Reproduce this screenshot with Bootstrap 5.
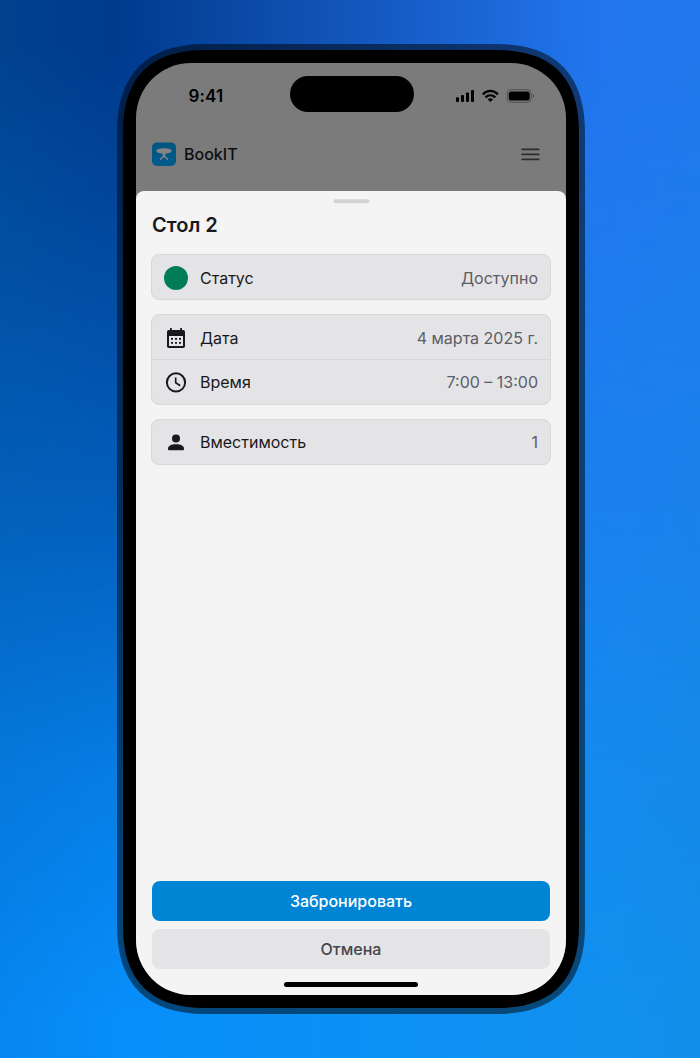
<!DOCTYPE html>
<html lang="ru">
<head>
<meta charset="utf-8">
<meta name="viewport" content="width=device-width, initial-scale=1">
<title>BookIT</title>
<link href="https://cdn.jsdelivr.net/npm/bootstrap@5.3.0/dist/css/bootstrap.min.css" rel="stylesheet">
<style>
  body { font-family: Inter, "Liberation Sans", sans-serif; color: #19191c; overflow: hidden; }
  svg { display: block; flex: none; }
  .stage { width: 700px; height: 1058px; padding: 44px 115px 44px 117px; isolation: isolate;
    background: linear-gradient(90deg, #00428f 0%, #003a8c 16%, #1254b8 48%, #2375ee 85%, #2178ec 100%); }
  .stage::before { content: ""; position: absolute; inset: 0; z-index: -1;
    background: linear-gradient(90deg, #0686f0 0%, #078ffb 18%, #0b91f4 55%, #1190ee 88%, #128ee9 100%);
    -webkit-mask-image: linear-gradient(180deg, transparent 4%, rgba(0,0,0,.24) 28%, rgba(0,0,0,.47) 50%, rgba(0,0,0,.8) 73%, #000 96%);
    mask-image: linear-gradient(180deg, transparent 4%, rgba(0,0,0,.24) 28%, rgba(0,0,0,.47) 50%, rgba(0,0,0,.8) 73%, #000 96%); }
  .phone { display: grid; width: 468px; height: 970px; }
  .phone > * { grid-area: 1 / 1; }
  .screen { width: 430px; height: 932px; margin: 19px; border-radius: 55px; background: #7b7b7b; overflow: hidden; z-index: 1; }
  .statusbar { height: 66px; padding: 13px 31px 0 52.5px; color: #000; }
  .clock { font-size: 17px; font-weight: 600; line-height: 22px; width: 101.5px; margin-top: 9px; letter-spacing: .1px; }
  .island { width: 124px; height: 36px; background: #000; }
  .topbar { height: 61.5px; padding: 0 24px 10.8px 16px; }
  .brand-name { font-size: 16px; font-weight: 500; line-height: 24px; margin-top: -1px; color: #0e0e10; }
  .sheet { background: #f4f4f4; border-radius: 8px 8px 0 0; padding: 8.5px 15px 8px; }
  .grabber { width: 36px; height: 4px; background: #d3d3d8; transform: translate(.5px, .3px); }
  .sheet-title { font-size: 20px; font-weight: 600; line-height: 28px; margin: 8.2px 0 14.8px 1px; }
  .info { border: 1px solid #d7d7da; border-radius: 8px; background: #e4e4e6; margin: 0 0 14px; }
  .info-row { height: 44px; padding: 0 12px; font-size: 16px; }
  .info-row + .info-row { border-top: 1px solid #d7d7da; height: 45px; }
  .info-row.lower { padding-top: 1.5px; }
  .info-value { color: #5c5c66; }
  .dot { width: 24px; height: 24px; background: #007d55; }
  .action { height: 40px; border: 0; border-radius: 8px; font-size: 16px; font-weight: 500; padding: 0 0 1px; line-height: 38px; width: 398.5px; }
  .action-main, .action-main:hover { background: #0084d4; color: #fff; font-weight: 550; }
  .action-alt, .action-alt:hover { background: #e4e4e6; color: #45454b; }
  .home { width: 134px; height: 5px; background: #000; margin-top: 13px; }
</style>
</head>
<body>
<div class="stage position-relative">
  <div class="phone">
    <svg width="468" height="970" viewBox="0 0 468 970">
      <path fill="#000" fill-opacity=".5" d="M0 88C0 30 30 0 88 0H380C438 0 468 30 468 88V882C468 940 438 970 380 970H88C30 970 0 940 0 882Z"/>
      <path d="M6 88C6 33.300 33.300 6 88 6H380C434.700 6 462 33.300 462 88V882C462 936.700 434.700 964 380 964H88C33.300 964 6 936.700 6 882Z"/>
    </svg>
    <main class="screen d-flex flex-column">
      <div class="statusbar d-flex align-items-start">
        <div class="clock">9:41</div>
        <div class="island rounded-pill"></div>
        <svg class="ms-auto" style="margin-top:13px" width="79" height="14" viewBox="0 0 79 14">
          <rect x="0" y="8.300" width="3" height="4.700" rx="1"/><rect x="5" y="6" width="3" height="7" rx="1"/><rect x="10" y="3.500" width="3" height="9.500" rx="1"/><rect x="15" y="1" width="3" height="12" rx="1"/>
          <g fill="none" stroke="#000" stroke-width="2.300"><path d="M26.800 5.300C31.500.900 37.300.900 42 5.300"/><path d="M29.500 8.400C32.400 5.600 36.400 5.600 39.300 8.400"/></g>
          <path d="M34.400 13 31.700 10.300C33.300 8.900 35.500 8.900 37.100 10.300Z"/>
          <rect x="51.200" y=".700" width="24" height="12.600" rx="4" fill="none" stroke="#000" stroke-opacity=".35"/>
          <rect x="52.700" y="2.400" width="21" height="9.200" rx="2.500"/>
          <path d="M76.700 5v4c.800-.300 1.300-1.100 1.300-2S77.500 5.300 76.700 5Z" fill-opacity=".4"/>
        </svg>
      </div>
      <header class="topbar d-flex align-items-center gap-2">
        <svg width="24" height="24" viewBox="0 0 24 24">
          <defs><linearGradient id="lg" x2="0" y2="1"><stop stop-color="#00567f"/><stop offset="1" stop-color="#005a8c"/></linearGradient></defs>
          <rect y=".4" width="24" height="23.600" rx="5" fill="url(#lg)"/>
          <g fill="#858585"><ellipse cx="12" cy="9" rx="7.700" ry="2.700"/><path d="M10.900 10h2.200l.300 4.800h-2.800Z"/></g>
          <path d="M8.500 18c.300-2.200 1.300-3.100 3.500-3.100s3.200.900 3.500 3.100" fill="none" stroke="#858585" stroke-width="1.200"/>
        </svg>
        <span class="brand-name">BookIT</span>
        <svg class="ms-auto" width="24" height="24" viewBox="0 0 24 24" fill="none" stroke="#2d2d30" stroke-width="1.900" stroke-linecap="round"><path d="M4.200 7.400h16.500M4.200 12.400h16.500M4.200 17.400h16.500"/></svg>
      </header>
      <section class="sheet flex-fill d-flex flex-column">
        <div class="grabber rounded-pill mx-auto"></div>
        <h1 class="sheet-title">Стол 2</h1>
        <div class="info">
          <div class="info-row lower d-flex align-items-center"><span class="dot rounded-circle me-2"></span><span class="ms-1">Статус</span><span class="info-value ms-auto">Доступно</span></div>
        </div>
        <div class="info">
          <div class="info-row lower d-flex align-items-center">
            <svg class="me-2" width="24" height="24" viewBox="0 0 24 24" fill="#19191c"><path fill-rule="evenodd" d="M6 2h1.800v2h8.400V2H18v2h1.200A1.800 1.800 0 0 1 21 5.800v14.400a1.800 1.800 0 0 1-1.800 1.800H4.800A1.800 1.800 0 0 1 3 20.200V5.800A1.800 1.800 0 0 1 4.800 4H6ZM5 10v10h14V10Z"/><path d="M7 12h2v1.800H7zm4 0h2v1.800h-2zm4 0h2v1.800h-2zm-8 4h2v1.800H7zm4 0h2v1.800h-2zm4 0h2v1.800h-2z"/></svg>
            <span class="ms-1">Дата</span><span class="info-value ms-auto">4 марта 2025 г.</span>
          </div>
          <div class="info-row d-flex align-items-center">
            <svg class="me-2" width="24" height="24" viewBox="0 0 24 24" fill="none" stroke="#19191c"><circle cx="12" cy="12.400" r="9.100" stroke-width="2"/><path d="M11.700 7.400v5.400l4.600 2.900" stroke-width="1.600"/></svg>
            <span class="ms-1">Время</span><span class="info-value ms-auto">7:00 – 13:00</span>
          </div>
        </div>
        <div class="info">
          <div class="info-row d-flex align-items-center">
            <svg class="me-2" width="24" height="24" viewBox="0 0 24 24" fill="#19191c"><circle cx="12" cy="8.400" r="4"/><path d="M4 18.800C4 15.500 7.500 14.300 12 14.300s8 1.200 8 4.500v.500a1 1 0 0 1-1 1H5a1 1 0 0 1-1-1Z"/></svg>
            <span class="ms-1">Вместимость</span><span class="info-value ms-auto">1</span>
          </div>
        </div>
        <div class="mt-auto d-flex flex-column align-items-center gap-2">
          <button type="button" class="btn action action-main">Забронировать</button>
          <button type="button" class="btn action action-alt">Отмена</button>
        </div>
        <div class="home rounded-pill mx-auto"></div>
      </section>
    </main>
  </div>
</div>
<script src="https://cdn.jsdelivr.net/npm/bootstrap@5.3.0/dist/js/bootstrap.bundle.min.js"></script>
</body>
</html>
